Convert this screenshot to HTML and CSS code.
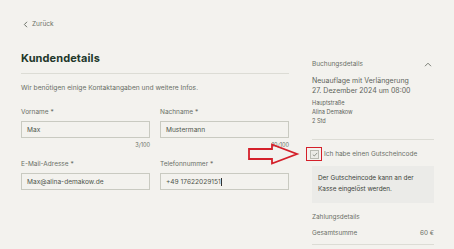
FILE: index.html
```html
<!DOCTYPE html>
<html lang="de">
<head>
<meta charset="utf-8">
<link rel="stylesheet" href="styles.css">
</head>
<body>
<div class="page">
  <div class="back"><svg class="chev" width="6" height="7" viewBox="0 0 6 7"><path d="M4 0.8 L1.4 3.5 L4 6.2" fill="none" stroke="#5d645a" stroke-width="0.9"/></svg><span>Zurück</span></div>
  <div class="cols">
    <section class="main">
      <h1 class="title">Kundendetails</h1>
      <p class="intro">Wir benötigen einige Kontaktangaben und weitere Infos.</p>
      <div class="grid">
        <div class="field">
          <label class="lbl">Vorname *</label>
          <div class="input">Max</div>
          <div class="count">3/100</div>
        </div>
        <div class="field">
          <label class="lbl">Nachname *</label>
          <div class="input">Mustermann</div>
          <div class="count">10/100</div>
        </div>
        <div class="field">
          <label class="lbl">E-Mail-Adresse *</label>
          <div class="input">Max@alina-demakow.de</div>
        </div>
        <div class="field">
          <label class="lbl">Telefonnummer *</label>
          <div class="input">+49 17622029151<span class="caret"></span></div>
        </div>
      </div>
    </section>
    <aside class="side">
      <div class="side-head"><span>Buchungsdetails</span><svg width="8" height="5" viewBox="0 0 8 5"><path d="M1 4.2 L4 1.2 L7 4.2" fill="none" stroke="#6b7067" stroke-width="0.9"/></svg></div>
      <div class="svc">Neuauflage mit Verlängerung</div>
      <div class="svc">27. Dezember 2024 um 08:00</div>
      <div class="small first">Hauptstraße</div>
      <div class="small">Alina Demakow</div>
      <div class="small">2 Std</div>
      <div class="coupon">
        <span class="cb"><svg width="6" height="5" viewBox="0 0 6 5"><path d="M0.8 2.6 L2.3 4 L5.2 0.9" fill="none" stroke="#7a7e75" stroke-width="0.8"/></svg></span>
        <span>Ich habe einen Gutscheincode</span>
      </div>
      <div class="note">Der Gutscheincode kann an der<br>Kasse eingelöst werden.</div>
      <div class="pay">Zahlungsdetails</div>
      <div class="total"><span>Gesamtsumme</span><span>60 €</span></div>
    </aside>
  </div>
  <div class="mark-box"></div>
  <svg class="arrow" width="52" height="22" viewBox="0 0 52 22"><path d="M1 6 L24 6 L24 1.5 L49 11 L24 20.5 L24 16 L1 16 Z" fill="none" stroke="#d4202a" stroke-width="1.8" stroke-linejoin="miter"/></svg>
</div>
</body>
</html>
```
FILE: styles.css
```css
* { box-sizing: border-box; margin: 0; padding: 0; }
html, body { width: 454px; height: 249px; overflow: hidden; }
body { background: #f3f2ee; font-family: Inter, "Noto Sans", sans-serif; color: #6a6f66; }
.page { position: relative; padding: 19px 20px 0 21px; height: 249px; }
.back { display: flex; align-items: center; gap: 3px; font-size: 6.5px; line-height: 10px; color: #6a6f66; padding-left: 2px; }
.cols { display: flex; gap: 23px; margin-top: 22px; }
.main { width: 268px; }
.title { font-size: 11px; font-weight: 700; color: #22372a; letter-spacing: 0.1px; line-height: 15px; padding-bottom: 7px; border-bottom: 1px solid #dcdcd5; }
.intro { font-size: 6.7px; line-height: 10px; margin-top: 9px; }
.grid { display: grid; grid-template-columns: 129px 129px; column-gap: 10px; margin-top: 14px; }
.lbl { display: block; font-size: 6.5px; line-height: 10px; }
.input { margin-top: 4px; height: 17px; border: 1px solid #c9cac1; font-size: 6.6px; color: #4f554d; padding-left: 5px; display: flex; align-items: center; background: #f3f2ee; }
.caret { display: inline-block; width: 0.8px; height: 8px; background: #333; margin-left: 0.5px; }
.count { text-align: right; font-size: 5.6px; line-height: 8px; margin-top: 3px; height: 18px; }
.side { width: 122px; }
.side-head { display: flex; justify-content: space-between; align-items: center; font-size: 6.5px; line-height: 10px; margin-top: 8px; padding-right: 2px; }
.svc { font-size: 7px; line-height: 10px; color: #5e645b; }
.side-head + .svc { margin-top: 7px; }
.small { font-size: 5.6px; line-height: 9px; color: #5e645b; }
.small.first { margin-top: 3px; }
.coupon { display: flex; align-items: center; gap: 5px; margin-top: 13px; padding-top: 9px; border-top: 1px solid #dcdcd5; font-size: 6.5px; line-height: 10px; }
.cb { width: 9px; height: 9px; margin-left: -2px; border: 1px solid #b9bab2; background: #ebebe6; display: flex; align-items: center; justify-content: center; }
.note { background: #ebebe8; margin-top: 7px; padding: 7px 6px 8px; font-size: 6.4px; line-height: 11px; color: #3d433b; }
.pay { font-size: 6.4px; line-height: 10px; margin-top: 9px; }
.total { display: flex; justify-content: space-between; font-size: 6.4px; line-height: 10px; margin-top: 6px; padding-bottom: 6px; border-bottom: 1px solid #dcdcd5; }
.mark-box { position: absolute; left: 306px; top: 147px; width: 16px; height: 14px; border: 1.6px solid #d4202a; }
.arrow { position: absolute; left: 248px; top: 143px; }
```
